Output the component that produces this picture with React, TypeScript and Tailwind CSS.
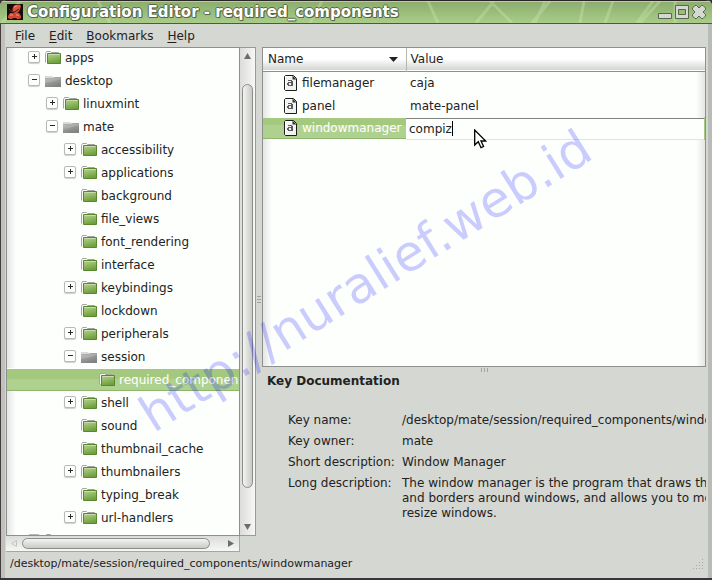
import { useState } from "react";

interface TreeItem {
  name: string;
  level: number;
  state?: "open" | "closed";
  grey?: boolean;
}

const TREE: TreeItem[] = [
  { name: "apps", level: 0, state: "closed" },
  { name: "desktop", level: 0, state: "open", grey: true },
  { name: "linuxmint", level: 1, state: "closed" },
  { name: "mate", level: 1, state: "open", grey: true },
  { name: "accessibility", level: 2, state: "closed" },
  { name: "applications", level: 2, state: "closed" },
  { name: "background", level: 2 },
  { name: "file_views", level: 2 },
  { name: "font_rendering", level: 2 },
  { name: "interface", level: 2 },
  { name: "keybindings", level: 2, state: "closed" },
  { name: "lockdown", level: 2 },
  { name: "peripherals", level: 2, state: "closed" },
  { name: "session", level: 2, state: "open", grey: true },
  { name: "required_components", level: 3 },
  { name: "shell", level: 2, state: "closed" },
  { name: "sound", level: 2 },
  { name: "thumbnail_cache", level: 2 },
  { name: "thumbnailers", level: 2, state: "closed" },
  { name: "typing_break", level: 2 },
  { name: "url-handlers", level: 2, state: "closed" },
  { name: "schemas", level: 0, state: "closed" },
];

const INDENT = ["pl-[21px]", "pl-[39px]", "pl-[57px]", "pl-[75px]"];

const KEYS = [
  { name: "filemanager", value: "caja" },
  { name: "panel", value: "mate-panel" },
];

function GreenFolder() {
  return (
    <svg width="16" height="15" viewBox="0 0 16 15" className="shrink-0" aria-hidden="true">
      <defs>
        <linearGradient id="green" x1="0" y1="0" x2="0.3" y2="1">
          <stop offset="0" stopColor="#b5d292" />
          <stop offset="0.45" stopColor="#97bd6c" />
          <stop offset="1" stopColor="#6f9f3c" />
        </linearGradient>
      </defs>
      <path d="M.5 12.500V3.500l1-2h4l1 1h7v2" fill="#fcfcfc" stroke="#a3a5a1" />
      <path d="M2.500 3.500h13v10h-13z" fill="url(#green)" stroke="#5b8630" />
      <path d="M3.500 4.500h11" stroke="#c6dfaa" />
    </svg>
  );
}

function GreyFolder() {
  return (
    <svg width="16" height="15" viewBox="0 0 16 15" className="shrink-0" aria-hidden="true">
      <defs>
        <linearGradient id="grey" x1="0" y1="0" x2="0.5" y2="1">
          <stop offset="0" stopColor="#b9b9b9" />
          <stop offset="0.5" stopColor="#9c9c9c" />
          <stop offset="1" stopColor="#828282" />
        </linearGradient>
      </defs>
      <path d="M0 3h7l1 1h7v2H0z" fill="#d9d9d9" />
      <path d="M0 5h8l1-1h7v10H0z" fill="url(#grey)" />
      <path d="M0 10q8-1 16-4V5H8L7 6H0z" fill="#fff" opacity=".15" />
    </svg>
  );
}

function StringIcon() {
  return (
    <svg width="13" height="16" viewBox="0 0 13 16" className="shrink-0" aria-hidden="true">
      <path d="M1.500.5h8l3 3v12h-11l-1-1v-13z" fill="#f2f2f2" stroke="#1c1c1c" />
      <path d="M2 1.500h6M1.500 2v12" stroke="#fff" />
      <path d="M8.500.5v4h4z" fill="#333" />
      <path
        d="M4 5h4v1h1v5H4v-1H3V8h1V7h3V6H4zM5 8v2h2V8z"
        fill="#5c5c5c"
        fillRule="evenodd"
      />
    </svg>
  );
}

function Expander({ item }: { item: TreeItem }) {
  if (!item.state) return <span className="w-3 shrink-0" />;
  return (
    <button
      aria-label={`Toggle ${item.name}`}
      className="mb-px h-3 w-3 shrink-0 rounded-xs border border-[#b9b9b9] bg-white shadow-[0_1px_1px_#cfcfcf]"
    >
      <svg width="10" height="10" viewBox="0 0 10 10" aria-hidden="true">
        <path d={item.state === "open" ? "M3 4.500h5" : "M3 4.500h5M5.500 2v5"} stroke="#2a2a2a" />
      </svg>
    </button>
  );
}

function TitleBar() {
  return (
    <header className="relative flex h-6 shrink-0 items-center overflow-hidden border-t border-b border-t-[#2b2527] border-b-[#4c5b40] bg-linear-to-b from-[#8bac6d] to-[#a9cd88] pl-[7px] pr-[6px]">
      <svg
        className="absolute inset-0 h-full w-full"
        viewBox="0 0 712 22"
        preserveAspectRatio="none"
        aria-hidden="true"
      >
        <path d="M0 .5h712" stroke="#b6d29c" />
        <path
          d="M98 0l12 22M310 22l12-22M428 0l10 22M476 22L494 0M490 0l22 22M535 22l10-22M550 0l-18 22M580 22l4-22M605 22l8-22M637 22l16-22M660 0l-20 22M675 0v22M20 0L2 22"
          stroke="#d6efc0"
          strokeWidth="3"
          opacity=".3"
        />
      </svg>
      <svg width="16" height="16" viewBox="0 0 16 16" className="relative" aria-hidden="true">
        <path d="M0 0h16v16H0z" fill="#160d0b" />
        <path d="M6 3l2-2 4-.5 2 1-1 4-2 3-4 1-2-2z" fill="#e0513a" />
        <path d="M1 12l2-3h9l2 3v2l-2 1h-2l-1-1H6l-1 1H3l-2-1z" fill="#d4452f" />
        <path d="M7 3l3-1M3 11h3M9 11h3" stroke="#f59a83" />
        <path d="M6 9l6-4M5 6l2 3" stroke="#4a150e" />
        <path d="M2 6l1-1M3 7h2" stroke="#8a2c1e" />
      </svg>
      <h1 className="relative ml-1 flex-1 whitespace-nowrap text-[15px] leading-5 font-bold text-white [text-shadow:1px_0_#56674a,-1px_0_#56674a,0_1px_#56674a,0_-1px_#56674a,1px_1px_#56674a]">
        Configuration Editor - required_components
      </h1>
      <div className="relative flex items-center gap-[3px]">
        <button aria-label="Minimize">
          <svg width="14" height="14" viewBox="0 0 14 14">
            <path d="M.5 8.500h13v5H.5z" fill="#d6d8d4" stroke="#56674a" />
          </svg>
        </button>
        <button aria-label="Maximize">
          <svg width="14" height="14" viewBox="0 0 14 14">
            <path d="M.5.5h13v13H.5zM3.500 4.500v5h7v-5z" fillRule="evenodd" fill="#d6d8d4" stroke="#56674a" />
          </svg>
        </button>
        <button aria-label="Close">
          <svg width="14" height="14" viewBox="0 0 14 14">
            <path
              d="M3 .5h1.500L7 3 9.500.5H11L13.500 3v1.500L11 7l2.500 2.500V11L11 13.500H9.500L7 11l-2.500 2.500H3L.5 11V9.500L3 7 .5 4.500V3z"
              fill="#d6d8d4"
              stroke="#56674a"
            />
          </svg>
        </button>
      </div>
    </header>
  );
}

function MenuBar() {
  return (
    <nav className="flex h-[23px] shrink-0 items-center gap-[14px] pt-[2px] pl-[10px] text-[12px]">
      {["File", "Edit", "Bookmarks", "Help"].map((label) => (
        <button key={label}>
          <span className="underline underline-offset-2">{label[0]}</span>
          {label.slice(1)}
        </button>
      ))}
    </nav>
  );
}

function VerticalScrollbar() {
  return (
    <div className="flex w-4 shrink-0 flex-col border-t border-r border-b border-[#9a9b98] bg-linear-to-r from-[#dcdddb] to-[#f7f7f6]">
      <button aria-label="Scroll up" className="flex h-4 items-center justify-center">
        <svg width="7" height="6" viewBox="0 0 7 6"><path d="M0 6l3.500-6L7 6z" fill="#6b6d69" /></svg>
      </button>
      <div className="flex flex-1 flex-col px-[2px]">
        <div className="flex-[20]" />
        <div className="flex-[405] rounded-full border border-[#8b8d89] bg-linear-to-r from-[#f4f4f3] to-[#c9cbc7]" />
        <div className="flex-[31]" />
      </div>
      <button aria-label="Scroll down" className="flex h-4 items-center justify-center">
        <svg width="7" height="6" viewBox="0 0 7 6"><path d="M0 0l3.500 6L7 0z" fill="#6b6d69" /></svg>
      </button>
    </div>
  );
}

function HorizontalScrollbar() {
  return (
    <div className="mr-4 flex h-4 shrink-0 border-r border-b border-[#a5a69f] bg-linear-to-b from-[#dcdddb] to-[#f7f7f6]">
      <button aria-label="Scroll left" className="flex w-4 items-center justify-center">
        <svg width="6" height="7" viewBox="0 0 6 7"><path d="M5.500.5v6L.5 3.500z" fill="none" stroke="#c2c4bf" /></svg>
      </button>
      <div className="flex flex-1 py-[2px]">
        <div className="flex-[188] rounded-full border border-[#8b8d89] bg-linear-to-b from-[#f4f4f3] to-[#c9cbc7]" />
        <div className="flex-[13]" />
      </div>
      <button aria-label="Scroll right" className="flex w-4 items-center justify-center">
        <svg width="6" height="7" viewBox="0 0 6 7"><path d="M0 0v7l6-3.500z" fill="#6b6d69" /></svg>
      </button>
    </div>
  );
}

function TreePane() {
  return (
    <section className="flex w-[250px] shrink-0 flex-col">
      <div className="flex min-h-0 flex-1">
        <div className="min-w-0 flex-1 overflow-hidden border border-[#8f908d] bg-[linear-gradient(to_right,#e4e5e4_0,#fdfffd_9px)]">
          <ul className="-mt-[2px]">
            {TREE.map((item) => {
              const selected = item.name === "required_components";
              return (
                <li
                  key={item.name}
                  className={`flex h-[23px] items-center whitespace-nowrap border-y ${INDENT[item.level]} ${
                    selected
                      ? "border-t-white border-b-[#8fb46d] bg-linear-to-b from-[#a3c87e] from-50% to-[#afd18f] to-50% text-white"
                      : "border-transparent"
                  }`}
                >
                  <Expander item={item} />
                  <span className="ml-[5px] mr-1">{item.grey ? <GreyFolder /> : <GreenFolder />}</span>
                  <span className="pt-px">{item.name}</span>
                </li>
              );
            })}
          </ul>
        </div>
        <VerticalScrollbar />
      </div>
      <HorizontalScrollbar />
    </section>
  );
}

function KeyTable() {
  const [value, setValue] = useState("compiz");

  return (
    <div className="min-h-0 flex-1 overflow-hidden border border-[#8f908d] bg-[linear-gradient(to_right,#e4e5e4_0,#fdfffd_9px,#fdfffd_calc(100%-9px),#e4e5e4_100%)]">
      <table className="w-full table-fixed border-collapse text-left">
        <colgroup>
          <col className="w-[143px]" />
          <col />
        </colgroup>
        <thead>
          <tr className="h-[23px] border-b border-[#8f908d] bg-linear-to-b from-white from-50% to-[#d3d5d1]">
            <th className="border-r border-[#b4b6b2] px-[5px] font-normal">
              <button className="flex w-full items-center justify-between pr-[3px]">
                Name
                <svg width="9" height="5" viewBox="0 0 9 5" aria-hidden="true">
                  <path d="M0 0h9L4.500 5z" fill="#222" />
                </svg>
              </button>
            </th>
            <th className="px-1 font-normal">Value</th>
          </tr>
        </thead>
        <tbody>
          {KEYS.map((key) => (
            <tr key={key.name} className="h-[23px]">
              <td className="p-0">
                <span className="flex items-center gap-[5px] pl-[21px]">
                  <StringIcon />
                  <span className="pt-px">{key.name}</span>
                </span>
              </td>
              <td className="pt-px pb-0 pl-1">{key.value}</td>
            </tr>
          ))}
          <tr className="h-[23px]">
            <td className="p-0 text-white">
              <span className="flex h-[21px] items-center gap-[5px] border-b border-[#8fb46d] bg-linear-to-b from-[#a3c87e] from-35% to-[#afd18f] to-35% pl-[21px]">
                <StringIcon />
                <span className="pt-px">windowmanager</span>
              </span>
            </td>
            <td className="relative border-r border-[#a3c87e] p-0">
              <input
                aria-label="Value of windowmanager"
                value={value}
                onChange={(e) => setValue(e.target.value)}
                className="block h-[22px] w-full border-t border-b border-t-[#80827e] border-b-[#e2e4e1] bg-[#fdfffd] pl-[3px] outline-none"
              />
              {/* text cursor after the value */}
              <span className="absolute top-1 left-[46px] h-[15px] w-px bg-black" />
            </td>
          </tr>
        </tbody>
      </table>
    </div>
  );
}

function KeyDocumentation() {
  return (
    <section className="h-[179px] shrink-0 overflow-hidden pt-px pl-[5px] whitespace-nowrap">
      <h2 className="text-[12px] leading-[15px] font-bold">Key Documentation</h2>
      <dl className="mt-6 grid grid-cols-[108px_1fr] gap-x-[6px] gap-y-[6px] pl-[21px] leading-[15px]">
        <dt>Key name:</dt>
        <dd>/desktop/mate/session/required_components/windowmanager</dd>
        <dt>Key owner:</dt>
        <dd>mate</dd>
        <dt>Short description:</dt>
        <dd>Window Manager</dd>
        <dt>Long description:</dt>
        <dd>
          The window manager is the program that draws the title
          <br />
          and borders around windows, and allows you to move and
          <br />
          resize windows.
        </dd>
      </dl>
    </section>
  );
}

export default function App() {
  return (
    <div className="h-screen bg-[#3a3034] font-['DejaVu_Sans',sans-serif] text-[12px] leading-[15px] text-[#222]">
      <div className="relative flex h-full flex-col overflow-hidden rounded-t-md border-b-2 border-[#3a3537] bg-[#d5d7d3]">
        <TitleBar />
        <div className="flex min-h-0 flex-1 flex-col border-l border-[#453c3e]">
          <div className="flex min-h-0 flex-1 flex-col border-x-4 border-l-[#bfc1bd] border-r-[#b9bbb7]">
            <MenuBar />
            <main className="flex min-h-0 flex-1 pl-px pr-[2px]">
              <TreePane />
              <div className="flex w-[6px] shrink-0 items-center justify-center">
                <svg width="4" height="7" viewBox="0 0 4 7" aria-hidden="true">
                  <path d="M0 .5h4M0 3.500h4M0 6.500h4" stroke="#a1a39f" />
                </svg>
              </div>
              <div className="flex min-w-0 flex-1 flex-col">
                <KeyTable />
                <div className="flex h-[6px] shrink-0 items-center justify-center">
                  <svg width="7" height="4" viewBox="0 0 7 4" aria-hidden="true">
                    <path d="M.5 0v4M3.500 0v4M6.500 0v4" stroke="#a1a39f" />
                  </svg>
                </div>
                <KeyDocumentation />
              </div>
            </main>
            <footer className="flex h-[26px] shrink-0 items-center justify-between pb-1 pl-[5px] pr-1 text-[11px]">
              <span>/desktop/mate/session/required_components/windowmanager</span>
              <svg width="11" height="11" viewBox="0 0 11 11" aria-hidden="true">
                <path
                  d="M0 10.500h11M3 7.500h8M6 4.500h5M9 1.500h2"
                  stroke="#a5a7a3"
                  strokeDasharray="1 2"
                />
              </svg>
            </footer>
          </div>
        </div>

        {/* watermark */}
        <div className="pointer-events-none absolute inset-0 flex items-center justify-center pb-4 pl-5">
          <span className="-rotate-32 whitespace-nowrap text-[50px] leading-none text-[#0000ff]/20">
            http://nuralief.web.id
          </span>
        </div>

        {/* mouse pointer */}
        <svg
          width="13"
          height="20"
          viewBox="0 0 13 20"
          className="pointer-events-none absolute top-[129px] left-[474px]"
          aria-hidden="true"
        >
          <path
            d="M.7 1v15l3.600-3.300 2.700 6 2.600-1.200-2.600-5.500h4.700z"
            fill="#fff"
            stroke="#000"
            strokeWidth="1.300"
          />
        </svg>
      </div>
    </div>
  );
}
